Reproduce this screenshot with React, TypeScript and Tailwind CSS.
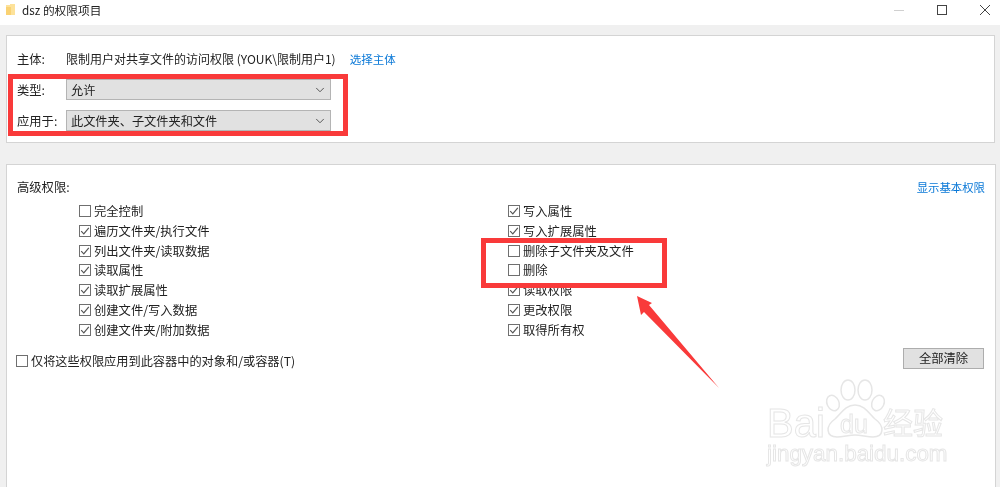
import React from 'react';
import { ChevronDown } from 'lucide-react';

const leftPerms: [string, boolean][] = [
  ['完全控制', false],
  ['遍历文件夹/执行文件', true],
  ['列出文件夹/读取数据', true],
  ['读取属性', true],
  ['读取扩展属性', true],
  ['创建文件/写入数据', true],
  ['创建文件夹/附加数据', true],
];

const rightPerms: [string, boolean][] = [
  ['写入属性', true],
  ['写入扩展属性', true],
  ['删除子文件夹及文件', false],
  ['删除', false],
  ['读取权限', true],
  ['更改权限', true],
  ['取得所有权', true],
];

const Check: React.FC<{ label: string; checked: boolean }> = ({ label, checked }) => (
  <div className="flex h-[19.85px] items-center gap-[3px]">
    <span className="flex h-[12px] w-[12px] shrink-0 items-center justify-center border border-[#6f6f6f] bg-white">
      {checked && (
        <svg width="10" height="10" viewBox="0 0 10 10" fill="none">
          <path d="M1.2 5.2 L3.8 7.8 L8.8 1.8" stroke="#555" strokeWidth="1.2" />
        </svg>
      )}
    </span>
    <span>{label}</span>
  </div>
);

const Select: React.FC<{ value: string }> = ({ value }) => (
  <div className="flex h-[21px] w-[265px] items-center justify-between border border-[#b4b4b4] bg-[#e1e1e1] pl-[4px] pr-[3px]">
    <span className="text-[12.2px]">{value}</span>
    <ChevronDown size={14} strokeWidth={1.5} className="text-[#444]" />
  </div>
);

const Watermark: React.FC = () => (
  <div className="pointer-events-none absolute left-[767px] top-[378px] h-[90px] w-[185px]">
    <svg className="absolute left-0 top-0" width="185" height="70" viewBox="0 0 185 70" fill="none" stroke="#e6e6e6" strokeWidth="1.5">
      <ellipse cx="81" cy="12" rx="7" ry="10" />
      <ellipse cx="98" cy="12" rx="7" ry="10" />
      <ellipse cx="66" cy="25" rx="6" ry="8" transform="rotate(-25 66 25)" />
      <ellipse cx="111" cy="25" rx="6" ry="8" transform="rotate(25 111 25)" />
      <path d="M88 27 C78 27 74 36 68 41 C58 48 59 59 70 59 C76 59 82 57 88 57 C94 57 100 59 106 59 C117 59 118 48 108 41 C102 36 98 27 88 27 Z" />
    </svg>
    <span className="absolute left-0 top-[25px] font-['Liberation_Sans',sans-serif] text-[40px] leading-[40px] text-transparent [-webkit-text-stroke:1px_#e6e6e6]">Bai</span>
    <span className="absolute left-[73px] top-[32px] font-['Liberation_Sans',sans-serif] text-[25px] leading-[28px] text-transparent [-webkit-text-stroke:1px_#e6e6e6]">du</span>
    <span className="absolute left-[116px] top-[23px] text-[30px] leading-[40px] text-transparent [-webkit-text-stroke:1px_#e6e6e6]">经验</span>
    <span className="absolute left-0 top-[63px] font-['Liberation_Sans',sans-serif] text-[22.4px] leading-[26px] text-transparent [-webkit-text-stroke:1px_#e6e6e6]">jingyan.baidu.com</span>
  </div>
);

export default function App() {
  return (
    <div className="relative flex h-[487px] w-[1000px] flex-col overflow-hidden bg-[#f0f0f0] font-['Noto_Sans_CJK_SC','Noto_Sans',sans-serif] text-[12.3px] leading-[16px] text-[#222] blur-[0.5px]">
      {/* title bar */}
      <div className="flex h-[25px] items-center justify-between bg-white pb-[5px] pl-[6px] pr-[10px]">
        <div className="flex items-center gap-[7px]">
          <svg width="9" height="12" viewBox="0 0 9 12">
            <path d="M0 1 H4 V0 H9 V11 H0 Z" fill="#fde29a" />
            <path d="M0 3 H5 V11 H0 Z" fill="#fad273" />
          </svg>
          <span className="text-[11.7px]">dsz 的权限项目</span>
        </div>
        <div className="flex items-center gap-[33px]">
          <span className="h-px w-[10px] bg-[#d0d0d0]" />
          <span className="h-[10px] w-[10px] border border-[#444]" />
          <svg width="10" height="10" viewBox="0 0 10 10" stroke="#444" strokeWidth="1">
            <path d="M0 0 L10 10 M10 0 L0 10" />
          </svg>
        </div>
      </div>

      {/* principal panel */}
      <div className="mx-[6px] mb-[21px] mt-[10px] flex h-[108px] w-[989px] flex-col border border-[#d4d4d4] bg-white pl-[10px]">
        <div className="mt-[15px] flex h-[16px] items-center">
          <span className="w-[49px]">主体:</span>
          <span className="text-[12px]">限制用户对共享文件的访问权限 (YOUK\限制用户1)</span>
          <span className="ml-[14px] text-[11.5px] text-[#0a78d7]">选择主体</span>
        </div>
        <div className="mt-[12px] flex items-center">
          <span className="w-[49px]">类型:</span>
          <Select value="允许" />
        </div>
        <div className="mt-[10px] flex items-center">
          <span className="w-[49px]">应用于:</span>
          <Select value="此文件夹、子文件夹和文件" />
        </div>
      </div>

      {/* permissions panel */}
      <div className="mx-[6px] flex w-[990px] flex-1 flex-col border border-b-0 border-[#d4d4d4] bg-white pl-[10px] pr-[10px]">
        <div className="mt-[14px] flex h-[16px] items-center justify-between">
          <span>高级权限:</span>
          <span className="text-[11.4px] text-[#0a78d7]">显示基本权限</span>
        </div>
        <div className="mt-[6px] flex">
          <div className="ml-[62px] w-[429px]">
            {leftPerms.map(([label, checked]) => (
              <Check key={label} label={label} checked={checked} />
            ))}
          </div>
          <div>
            {rightPerms.map(([label, checked]) => (
              <Check key={label} label={label} checked={checked} />
            ))}
          </div>
        </div>
        <div className="mt-[8px] flex items-start justify-between">
          <div className="-ml-px mt-[3px] text-[12.2px]">
            <Check label="仅将这些权限应用到此容器中的对象和/或容器(T)" checked={false} />
          </div>
          <div className="mr-px flex h-[21px] w-[81px] items-center justify-center border border-[#adadad] bg-[#e1e1e1]">
            全部清除
          </div>
        </div>
      </div>

      {/* annotations drawn over the screenshot */}
      <div className="pointer-events-none absolute left-[8px] top-[74px] h-[62px] w-[340px] border-[5px] border-[#f93a3a]" />
      <div className="pointer-events-none absolute left-[481px] top-[238px] h-[50px] w-[186px] border-[5px] border-[#f93a3a]" />
      <svg className="pointer-events-none absolute left-[630px] top-[290px]" width="95" height="105" viewBox="0 0 95 105">
        <path d="M7 6 L22 13 L19 15 L89 98 L14 22 L11 25 Z" fill="#f93a3a" />
      </svg>
      <Watermark />
    </div>
  );
}
